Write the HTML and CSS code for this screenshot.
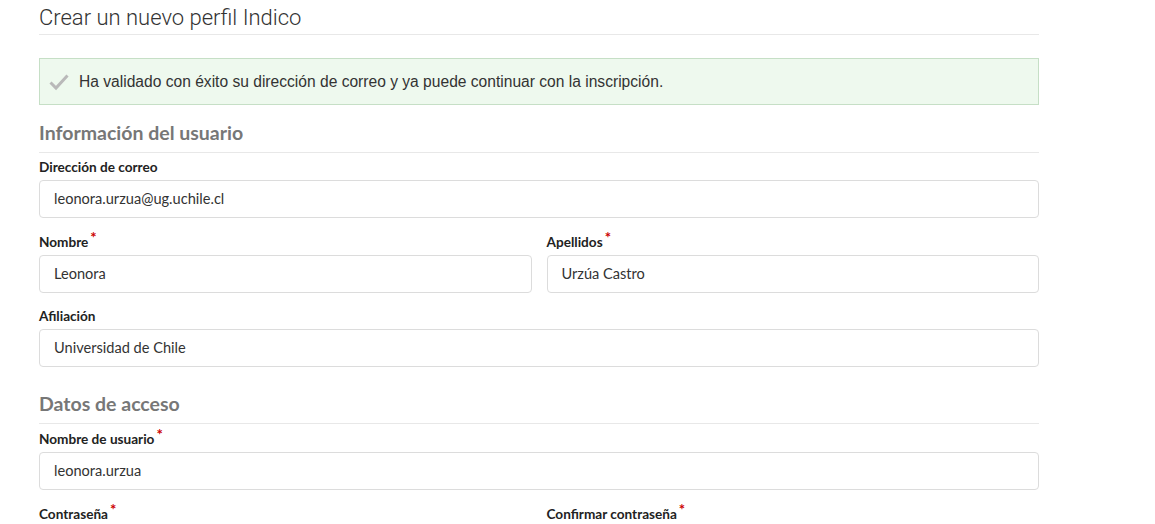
FILE: index.html
```html
<!DOCTYPE html>
<html lang="es">
<head>
<meta charset="utf-8">
<title>Crear un nuevo perfil Indico</title>
<link rel="stylesheet" href="styles.css">
</head>
<body>
<div class="page">
  <h1 class="title">Crear un nuevo perfil Indico</h1>
  <div class="alert">
    <svg class="check" width="20" height="20" viewBox="0 0 20 20" aria-hidden="true">
      <path d="M1.5 10.5 L7 16 L18.5 3.5" fill="none" stroke="#b9b9b9" stroke-width="3" stroke-linejoin="miter"/>
    </svg>
    <span>Ha validado con éxito su dirección de correo y ya puede continuar con la inscripción.</span>
  </div>

  <h2 class="section">Información del usuario</h2>
  <div class="field">
    <label class="label">Dirección de correo</label>
    <div class="input">leonora.urzua@ug.uchile.cl</div>
  </div>
  <div class="row">
    <div class="field">
      <label class="label">Nombre<span class="req">*</span></label>
      <div class="input">Leonora</div>
    </div>
    <div class="field">
      <label class="label">Apellidos<span class="req">*</span></label>
      <div class="input">Urzúa Castro</div>
    </div>
  </div>
  <div class="field">
    <label class="label">Afiliación</label>
    <div class="input">Universidad de Chile</div>
  </div>

  <h2 class="section second">Datos de acceso</h2>
  <div class="field">
    <label class="label">Nombre de usuario<span class="req">*</span></label>
    <div class="input">leonora.urzua</div>
  </div>
  <div class="row">
    <div class="field">
      <label class="label">Contraseña<span class="req">*</span></label>
      <div class="input"></div>
    </div>
    <div class="field">
      <label class="label">Confirmar contraseña<span class="req">*</span></label>
      <div class="input"></div>
    </div>
  </div>
</div>
</body>
</html>
```
FILE: styles.css
```css
html, body {
  margin: 0;
  padding: 0;
  background: #fff;
}
body {
  font-family: Lato, "Noto Sans", sans-serif;
  color: #333;
}
.page {
  width: 1000px;
  margin-left: 39px;
}
.title {
  margin: 0;
  padding-top: 4px;
  padding-bottom: 2px;
  font-family: Roboto, sans-serif;
  font-weight: 300;
  font-size: 22px;
  line-height: 28px;
  color: #333;
  border-bottom: 1px solid #e8e8e8;
}
.alert {
  margin-top: 23px;
  display: flex;
  align-items: center;
  box-sizing: border-box;
  height: 47px;
  padding: 0 9px;
  background: #eef9ee;
  border: 1px solid #c6dfc6;
  font-family: "Liberation Sans", Arial, sans-serif;
  font-size: 15.6px;
  line-height: 20px;
  color: #333;
}
.check {
  flex: none;
  margin-right: 10px;
}
.section {
  margin: 17px 0 0 0;
  padding-bottom: 8px;
  font-size: 19.5px;
  line-height: 22px;
  font-weight: 700;
  color: #777;
  border-bottom: 1px solid #e8e8e8;
}
.section.second {
  margin-top: 26px;
}
.field {
  margin-top: 15px;
}
.section + .field {
  margin-top: 6px;
}
.row {
  display: flex;
  gap: 15px;
}
.row .field {
  flex: 1;
}
.label {
  display: block;
  font-size: 13.6px;
  line-height: 16px;
  font-weight: 700;
  color: #222;
  margin-bottom: 5px;
}
.req {
  color: #c00;
  font-size: 15px;
  position: relative;
  top: -4px;
  margin-left: 2px;
}
.input {
  box-sizing: border-box;
  height: 38px;
  border: 1px solid #dcdcdc;
  border-radius: 4px;
  padding: 0 14px;
  font-size: 14.6px;
  line-height: 36px;
  color: #333;
}
```
